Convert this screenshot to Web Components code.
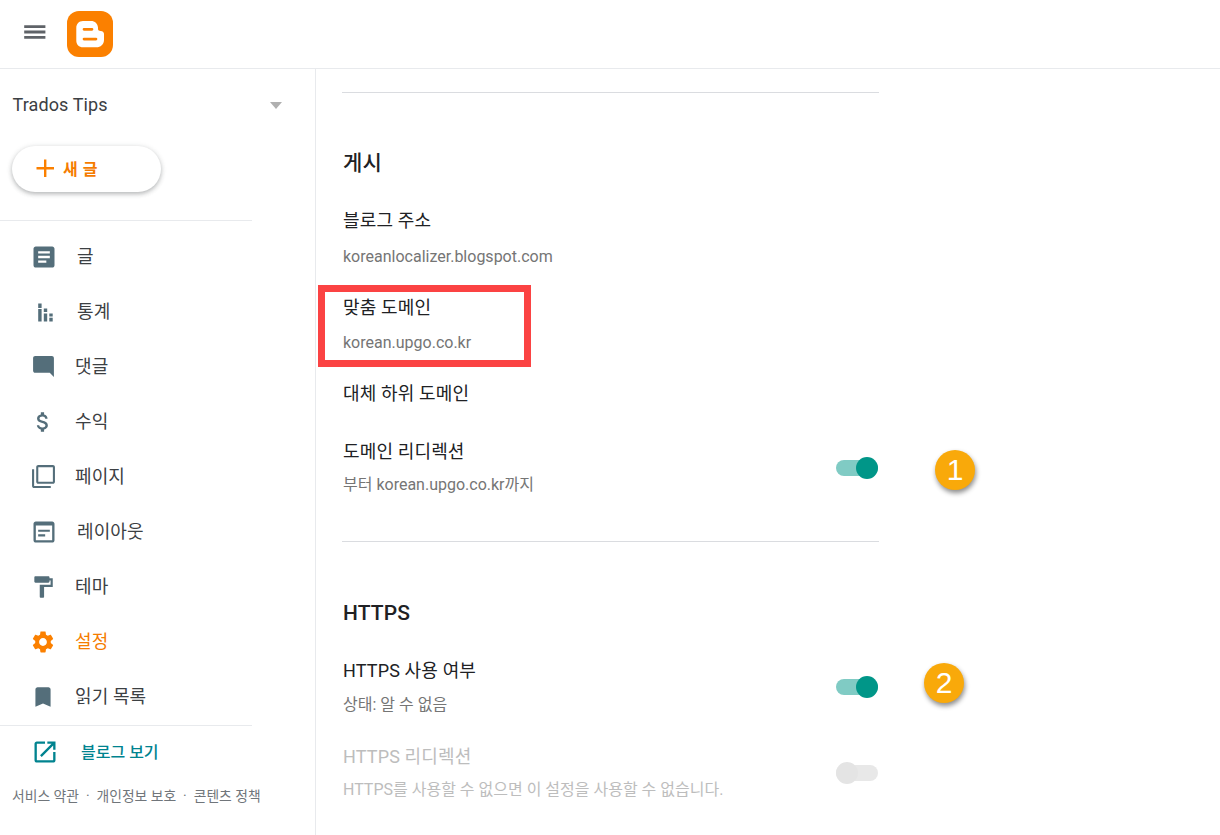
<!DOCTYPE html>
<html lang="ko"><head><meta charset="utf-8"><title>Blogger</title>
<style>
html,body{margin:0;height:100%;overflow:hidden;background:#fff}
body{font-family:Roboto,"Noto Sans CJK KR",sans-serif;color:#202124}
</style></head><body>
<app-shell>
  <top-bar slot="top"></top-bar>
  <side-nav slot="side"></side-nav>
  <settings-page slot="main"></settings-page>
</app-shell>
<script>
const P={
 post:'<path d="M19 3H5c-1.1 0-2 .9-2 2v14c0 1.1.9 2 2 2h14c1.1 0 2-.9 2-2V5c0-1.1-.9-2-2-2zm-5 14H7v-2h7v2zm3-4H7v-2h10v2zm0-4H7V7h10v2z"/>',
 stats:'<rect x="6.200" y="3.500" width="3.400" height="4.500"/><rect x="6.200" y="9" width="3.400" height="12.500"/><rect x="11.800" y="8.500" width="3.400" height="3.500"/><rect x="11.800" y="13.500" width="3.400" height="8"/><rect x="17.300" y="13.500" width="3.400" height="3"/><rect x="17.300" y="17.700" width="3.400" height="3.800"/>',
 comment:'<path d="M21.99 4c0-1.1-.89-2-1.99-2H4c-1.1 0-2 .9-2 2v12c0 1.1.9 2 2 2h14l4 4-.01-18z"/>',
 money:'<path d="M11.8 10.9c-2.27-.59-3-1.2-3-2.15 0-1.09 1.01-1.85 2.7-1.85 1.78 0 2.44.85 2.5 2.1h2.21c-.07-1.72-1.12-3.3-3.21-3.81V3h-3v2.16c-1.94.42-3.5 1.68-3.5 3.61 0 2.31 1.91 3.46 4.7 4.13 2.5.6 3 1.48 3 2.41 0 .69-.49 1.79-2.7 1.79-2.06 0-2.87-.92-2.98-2.1h-2.2c.12 2.19 1.76 3.42 3.68 3.83V21h3v-2.15c1.95-.37 3.5-1.5 3.5-3.55 0-2.84-2.43-3.81-4.7-4.4z"/>',
 pages:'<path d="M3 5H1v16c0 1.1.9 2 2 2h16v-2H3V5zm18-4H7c-1.1 0-2 .9-2 2v14c0 1.1.9 2 2 2h14c1.1 0 2-.9 2-2V3c0-1.1-.9-2-2-2zm0 16H7V3h14v14z"/>',
 layout:'<path d="M19 3H5c-1.1 0-2 .9-2 2v14c0 1.1.9 2 2 2h14c1.1 0 2-.9 2-2V5c0-1.1-.9-2-2-2zm0 16H5V6.500h14V19zM7 10h10v1.800H7zm0 4h6v1.800H7z"/>',
 theme:'<path d="M18 4V3c0-.55-.45-1-1-1H5c-.55 0-1 .45-1 1v4c0 .55.45 1 1 1h12c.55 0 1-.45 1-1V6h1v4H9v11c0 .55.45 1 1 1h2c.55 0 1-.45 1-1v-9h8V4h-3z"/>',
 gear:'<path d="M19.14 12.94c.04-.3.06-.61.06-.94 0-.32-.02-.64-.07-.94l2.03-1.58c.18-.14.23-.41.12-.61l-1.92-3.32c-.12-.22-.37-.29-.59-.22l-2.39.96c-.5-.38-1.03-.7-1.62-.94l-.36-2.54c-.04-.24-.24-.41-.48-.41h-3.84c-.24 0-.43.17-.47.41l-.36 2.54c-.59.24-1.13.57-1.62.94l-2.39-.96c-.22-.08-.47 0-.59.22L2.74 8.87c-.12.21-.08.47.12.61l2.03 1.58c-.05.3-.09.63-.09.94s.02.64.07.94l-2.03 1.58c-.18.14-.23.41-.12.61l1.92 3.32c.12.22.37.29.59.22l2.39-.96c.5.38 1.03.7 1.62.94l.36 2.54c.05.24.24.41.48.41h3.84c.24 0 .44-.17.47-.41l.36-2.54c.59-.24 1.13-.56 1.62-.94l2.39.96c.22.08.47 0 .59-.22l1.92-3.32c.12-.22.07-.47-.12-.61l-2.01-1.58zM12 15.6c-1.98 0-3.6-1.62-3.6-3.6s1.62-3.6 3.6-3.6 3.6 1.62 3.6 3.6-1.62 3.6-3.6 3.6z"/>',
 mark:'<path d="M17 3H7c-1.1 0-1.99.9-1.99 2L5 21l7-3 7 3V5c0-1.1-.9-2-2-2z"/>',
 open:'<path d="M19 19H5V5h7V3H5c-1.11 0-2 .9-2 2v14c0 1.1.89 2 2 2h14c1.1 0 2-.9 2-2v-7h-2v7zM14 3v2h3.59l-9.83 9.83 1.41 1.41L19 6.41V10h2V3h-7z"/>'
};
function def(name,css,html){
  customElements.define(name,class extends HTMLElement{
    constructor(){super();const r=this.attachShadow({mode:'open'});
      r.innerHTML='<style>'+css+'</style>'+(typeof html==='function'?html(this):html);}
  });
}
def('app-shell',`:host{display:grid;grid-template:69px 766px/316px 1fr;height:835px;width:1220px;overflow:hidden}
 .t{grid-column:1/3}.s{overflow:hidden}.m{overflow:hidden;position:relative}`,
 `<div class="t"><slot name="top"></slot></div><div class="s"><slot name="side"></slot></div><div class="m"><slot name="main"></slot></div>`);
def('top-bar',`:host{display:flex;align-items:center;height:68px;border-bottom:1px solid #e8eaed}
 .menu{width:24px;height:24px;margin:0 0 4px 23px;fill:#5f6368;flex:none}
 .logo{width:46px;height:46px;margin:0 0 0 20px;flex:none}`,
 `<svg class="menu" viewBox="0 0 24 24"><path d="M1.200 5.200h21.200v2.800H1.200zM1.200 10.600h21.200v2.800H1.200zM1.200 16h21.200v2.800H1.200z"/></svg>
  <svg class="logo" viewBox="0 0 46 46"><rect width="46" height="46" rx="12" fill="#fb8000"/>
  <path fill-rule="evenodd" fill="#fff" d="M16 10H24C28 10 30.500 12.500 31 16.500V18C31 19.300 32 20 33.500 20C36 20 37 21.500 37 23V29C37 33.500 33.500 36.300 29.500 36.300H16C12 36.300 9.300 33.500 9.300 29.500V17C9.300 12.800 12 10 16 10z
  M17 17a1.350 1.350 0 0 0 0 2.700H25a1.350 1.350 0 0 0 0-2.700zM17 26.700a1.350 1.350 0 0 0 0 2.700H29a1.350 1.350 0 0 0 0-2.700z"/></svg>`);
def('blog-picker',`:host{display:flex;align-items:center;justify-content:space-between;height:72px;padding:0 33px 0 12px;font-size:18px;color:#3c4043}
 span{letter-spacing:.1px;padding:0 0 2px .5px}
 i{width:0;height:0;border:6.500px solid transparent;border-top:7px solid #b0b0b0;border-bottom:0}`,
 `<span>Trados Tips</span><i></i>`);
def('new-post',`:host{display:flex;align-items:center;width:149px;height:46px;margin:5px 0 28px 12px;border-radius:23px;background:#fff;box-shadow:0 2px 4px rgba(60,64,67,.3),0 1px 6px rgba(60,64,67,.12);color:#f57c00;font-size:16px;font-weight:600;box-sizing:border-box;padding-left:23px;letter-spacing:.5px}
 svg{width:20px;height:20px;fill:#fb8000;margin:0 8px 2px 0;flex:none}
 span{padding-bottom:2px}`,
 `<svg viewBox="0 0 20 20"><path d="M9 1.500h2.400V9H19v2.400h-7.600V19H9v-7.600H1.500V9H9z"/></svg><span><slot></slot></span>`);
def('nav-item',`:host{display:flex;align-items:center;height:55px;font-size:18px;color:#3c4043;--c:#546e7a}
 :host([active]){color:#f57c00;--c:#fb8000}
 .ic{width:44px;flex:none;height:55px;display:flex;align-items:center;justify-content:center}
 svg{fill:var(--c)}
 span{display:block;padding-bottom:3px;letter-spacing:.1px}`,
 el=>{const s=+el.getAttribute('size')||26;
  return `<div class="ic" style="margin-left:${el.getAttribute('pad')||21}px"><svg width="${s}" height="${s}" viewBox="0 0 24 24">${P[el.getAttribute('icon')]}</svg></div><span style="margin-left:${el.getAttribute('gap')||10}px"><slot></slot></span>`});
def('side-nav',`:host{display:block;height:766px;border-right:1px solid #e8eaed;width:315px;overflow:hidden}
 hr{border:0;border-top:1px solid #e8eaed;margin:0;width:252px}
 .nav{padding:8px 0 1px}
 .view{display:flex;align-items:center;height:52px;color:#00838f;font-size:16px;font-weight:500}
 .view svg{width:28px;height:28px;fill:#00838f;margin:0 0 0 31px;flex:none}
 .view span{margin-left:22px;padding-bottom:2px}
 footer{display:flex;gap:7px;margin:8px 0 0 12px;font-size:13.800px;color:#70757a;white-space:nowrap;line-height:20px}`,
 `<blog-picker></blog-picker><new-post>새 글</new-post><hr>
 <div class="nav">
 <nav-item icon="post" size="28" pad="22" gap="11">글</nav-item>
 <nav-item icon="stats" size="24" pad="22" gap="11">통계</nav-item>
 <nav-item icon="comment" size="25">댓글</nav-item>
 <nav-item icon="money" size="26">수익</nav-item>
 <nav-item icon="pages" size="25">페이지</nav-item>
 <nav-item icon="layout" size="28" pad="22" gap="11">레이아웃</nav-item>
 <nav-item icon="theme" size="26">테마</nav-item>
 <nav-item icon="gear" size="26" active>설정</nav-item>
 <nav-item icon="mark" size="26">읽기 목록</nav-item>
 </div><hr>
 <div class="view"><svg viewBox="0 0 24 24">${P.open}</svg><span>블로그 보기</span></div>
 <footer><span>서비스 약관</span><span>·</span><span>개인정보 보호</span><span>·</span><span>콘텐츠 정책</span></footer>`);
def('toggle-switch',`:host{display:block;width:42px;height:22px;position:relative;flex:none}
 .t{position:absolute;left:0;right:0;top:3px;height:16px;border-radius:8px;background:#80cbc4}
 .k{position:absolute;right:0;top:0;width:22px;height:22px;border-radius:50%;background:#009688}
 :host([off]) .t{background:#e8e8e8}
 :host([off]) .k{right:auto;left:0;background:#e4e4e4}`,
 `<div class="t"></div><div class="k"></div>`);
def('setting-row',`:host{display:block;width:537px;position:relative;font-size:18px;color:#202124}
 .title{line-height:24px;height:24px;padding-left:1px;letter-spacing:.15px}
 .ctl{position:absolute;right:1px;top:17px}`,
 `<div class="title"><slot name="title"></slot></div><div class="ctl"><slot name="ctl"></slot></div>`);
def('setting-sub',`:host{display:block;font-size:16px;line-height:20px;color:#757575;padding-left:1px}
 :host([disabled]){color:#bdbdbd}`,`<slot></slot>`);
def('num-badge',`:host{position:absolute;display:flex;align-items:center;justify-content:center;width:40px;height:40px;border-radius:50%;background:#f9a90a;color:#fff;font:30px/40px "Liberation Sans",sans-serif;box-shadow:1px 3px 5px rgba(0,0,0,.45)}`,`<slot></slot>`);
def('mark-box',`:host{position:absolute;box-sizing:border-box;border:7px solid #fb4343;pointer-events:none}`,``);
def('settings-page',`:host{display:block;padding:23px 0 0 26px;position:relative;height:743px}
 hr{border:0;border-top:1px solid #dadce0;margin:0;width:537px}
 h2{margin:0;font-size:21px;font-weight:500;line-height:28px;color:#202124;padding-left:1px;letter-spacing:.1px}`,
 `<hr>
 <h2 style="margin-top:56px">게시</h2>
 <setting-row style="margin-top:32px"><span slot="title">블로그 주소</span></setting-row>
 <setting-sub style="margin-top:14px">koreanlocalizer.blogspot.com</setting-sub>
 <setting-row style="margin-top:29px"><span slot="title">맞춤 도메인</span></setting-row>
 <setting-sub style="margin-top:13px">korean.upgo.co.kr</setting-sub>
 <setting-row style="margin-top:29px"><span slot="title">대체 하위 도메인</span></setting-row>
 <setting-row style="margin-top:34px"><span slot="title">도메인 리디렉션</span><toggle-switch slot="ctl"></toggle-switch></setting-row>
 <setting-sub style="margin-top:11px">부터 korean.upgo.co.kr까지</setting-sub>
 <hr style="margin-top:46px">
 <h2 style="margin-top:57px">HTTPS</h2>
 <setting-row style="margin-top:32px"><span slot="title">HTTPS 사용 여부</span><toggle-switch slot="ctl"></toggle-switch></setting-row>
 <setting-sub style="margin-top:12px">상태: 알 수 없음</setting-sub>
 <setting-row style="margin-top:30px;color:#bdbdbd"><span slot="title">HTTPS 리디렉션</span><toggle-switch off slot="ctl"></toggle-switch></setting-row>
 <setting-sub disabled style="margin-top:11px">HTTPS를 사용할 수 없으면 이 설정을 사용할 수 없습니다.</setting-sub>
 <mark-box style="left:2px;top:216px;width:213px;height:82px"></mark-box>
 <num-badge style="left:619px;top:381px">1</num-badge>
 <num-badge style="left:608px;top:594px">2</num-badge>`);
</script>
</body></html>
